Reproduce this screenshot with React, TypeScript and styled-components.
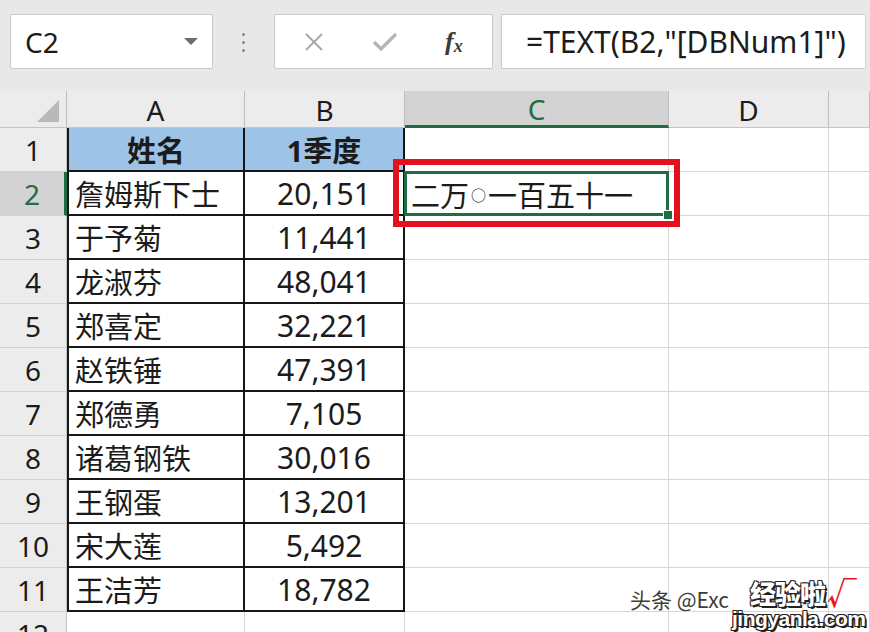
import React from 'react'
import styled, { createGlobalStyle } from 'styled-components'

const GlobalStyle = createGlobalStyle`
  html, body {
    margin: 0;
    padding: 0;
    background: #fff;
    overflow: hidden;
  }
  body {
    font-family: "Noto Sans", "Noto Sans CJK SC", sans-serif;
    color: #1b1b1b;
  }
`

const rows = [
  { name: '詹姆斯下士', q1: '20,151' },
  { name: '于予菊', q1: '11,441' },
  { name: '龙淑芬', q1: '48,041' },
  { name: '郑喜定', q1: '32,221' },
  { name: '赵铁锤', q1: '47,391' },
  { name: '郑德勇', q1: '7,105' },
  { name: '诸葛钢铁', q1: '30,016' },
  { name: '王钢蛋', q1: '13,201' },
  { name: '宋大莲', q1: '5,492' },
  { name: '王洁芳', q1: '18,782' },
]

const Page = styled.div`
  position: relative;
  width: 870px;
  height: 632px;
  overflow: hidden;
`

const Toolbar = styled.div`
  height: 91px;
  background: #e8e8e8;
  display: flex;
  align-items: flex-start;
  padding: 14px 0 0 10px;
  box-sizing: border-box;
`

const Box = styled.div<{ $w?: number }>`
  height: 55px;
  background: #fff;
  border: 1px solid #c9c9c9;
  border-radius: 2px;
  box-sizing: border-box;
  display: flex;
  align-items: center;
  ${p => (p.$w ? `width: ${p.$w}px; flex: none;` : 'flex: 1;')}
`

const NameBox = styled(Box)`
  justify-content: space-between;
  padding: 0 14px 0 14px;
  font-size: 28px;
`

const Caret = styled.span`
  width: 0;
  height: 0;
  border-left: 7px solid transparent;
  border-right: 7px solid transparent;
  border-top: 7px solid #6d6d6d;
`

const Dots = styled.div`
  width: 61px;
  flex: none;
  display: flex;
  flex-direction: column;
  align-items: center;
  gap: 5px;
  padding-top: 19px;
  span {
    width: 3px;
    height: 3px;
    border-radius: 50%;
    background: #8a8a8a;
  }
`

const FuncBox = styled(Box)`
  justify-content: flex-start;
  gap: 47px;
  padding: 0 0 0 28px;
  margin-right: 8px;
`

const Fx = styled.span`
  font-family: "Liberation Serif", serif;
  font-style: italic;
  font-weight: bold;
  font-size: 26px;
  color: #3a3a3a;
  sub {
    font-size: 18px;
    vertical-align: -2px;
  }
`

const FormulaBox = styled(Box)`
  padding-left: 24px;
  margin-right: 4px;
  font-size: 30px;
  white-space: nowrap;
  border-right-color: #d8d8d8;
`

const Grid = styled.div`
  display: grid;
  grid-template-columns: 67px 178px 160px 264px 160px 1fr;
  grid-template-rows: 37px repeat(12, 44px);
  background: #e8e8e8;
`

const ColHead = styled.div<{ $sel?: boolean }>`
  background: ${p => (p.$sel ? '#d3d3d3' : '#ececec')};
  border-right: 1px solid #bdbdbd;
  border-bottom: ${p => (p.$sel ? '3px solid #1f6e43' : '1px solid #c4c4c4')};
  box-sizing: border-box;
  display: flex;
  align-items: center;
  justify-content: center;
  font-size: 28px;
  color: ${p => (p.$sel ? '#1f6e43' : '#1b1b1b')};
  padding-top: 2px;
`

const Corner = styled(ColHead)`
  align-items: flex-end;
  justify-content: flex-end;
  padding: 0 7px 5px 0;
  border-right-color: #bdbdbd;
`

const Triangle = styled.span`
  width: 0;
  height: 0;
  border-left: 22px solid transparent;
  border-bottom: 22px solid #b9b9b9;
`

const RowHead = styled.div<{ $sel?: boolean }>`
  background: ${p => (p.$sel ? '#d3d3d3' : '#ececec')};
  border-right: ${p => (p.$sel ? '3px solid #1f6e43' : '1px solid #c4c4c4')};
  border-bottom: 1px solid #d2d2d2;
  box-sizing: border-box;
  display: flex;
  align-items: center;
  justify-content: center;
  font-size: 28px;
  color: ${p => (p.$sel ? '#1f6e43' : '#1b1b1b')};
`

const Cell = styled.div<{
  $table?: boolean
  $first?: boolean
  $center?: boolean
  $head?: boolean
  $sel?: boolean
}>`
  position: relative;
  box-sizing: border-box;
  background: ${p => (p.$head ? '#9dc3e6' : '#fff')};
  border-right: ${p => (p.$table ? '2px solid #161616' : '1px solid #d6d6d6')};
  border-bottom: ${p => (p.$table ? '2px solid #161616' : '1px solid #d6d6d6')};
  border-left: ${p => (p.$first ? '2px solid #161616' : 'none')};
  display: flex;
  align-items: center;
  justify-content: ${p => (p.$center ? 'center' : 'flex-start')};
  padding: 0 6px;
  font-size: ${p => (p.$center && !p.$head ? '30px' : '29px')};
  font-weight: ${p => (p.$head ? 700 : 400)};
  white-space: nowrap;
  z-index: ${p => (p.$sel ? 2 : 'auto')};
`

const SmallCircle = styled.span`
  font-size: 15px;
  padding: 0 2px;
  transform: translateY(1px);
`

const Selection = styled.div`
  position: absolute;
  top: -1px;
  left: -1px;
  right: -1px;
  bottom: -1px;
  border: 3px solid #1f6e43;
  pointer-events: none;
`

const FillHandle = styled.div`
  position: absolute;
  right: -5px;
  bottom: -5px;
  width: 8px;
  height: 8px;
  background: #1f6e43;
  border: 1px solid #fff;
`

const RedBox = styled.div`
  position: absolute;
  top: -13px;
  left: -12px;
  right: -12px;
  bottom: -12px;
  border: 6px solid #e2111d;
  pointer-events: none;
`

const Watermark = styled.div`
  position: absolute;
  left: 630px;
  top: 584px;
  display: flex;
  align-items: flex-end;
  font-family: "Noto Sans CJK SC", sans-serif;
  font-size: 21px;
  color: #3d3d3d;
  text-shadow: 0 0 2px #fff, 0 0 2px #fff;
  pointer-events: none;
`

const Logo = styled.div`
  position: absolute;
  left: 732px;
  top: 576px;
  display: flex;
  flex-direction: column;
  align-items: flex-start;
  pointer-events: none;
  color: #fff;
  font-family: "Noto Sans CJK SC", sans-serif;
  font-weight: 900;
  text-shadow: -1px -1px 0 #222, 1px -1px 0 #222, -1px 1px 0 #222, 1px 1px 0 #222,
    2px 2px 0 #222;
`

const LogoTop = styled.div`
  padding-left: 18px;
  font-size: 26px;
  line-height: 30px;
  letter-spacing: -1px;
  span {
    color: #e8141e;
    font-size: 30px;
    text-shadow: none;
    margin-left: 2px;
  }
`

const LogoBottom = styled.div`
  font-family: "Liberation Sans", sans-serif;
  font-size: 21px;
  line-height: 22px;
  letter-spacing: -0.5px;
`

export default function App() {
  const renderRest = (r: number) => (
    <>
      <Cell $sel={r === 2}>
        {r === 2 && (
          <>
            二万<SmallCircle>○</SmallCircle>一百五十一
            <Selection />
            <FillHandle />
            <RedBox />
          </>
        )}
      </Cell>
      <Cell />
      <Cell />
    </>
  )

  return (
    <Page>
      <GlobalStyle />
      <Toolbar>
        <NameBox $w={203}>
          C2
          <Caret />
        </NameBox>
        <Dots>
          <span />
          <span />
          <span />
        </Dots>
        <FuncBox $w={219}>
          <svg width="22" height="22" viewBox="0 0 22 22">
            <path d="M3 3 L19 19 M19 3 L3 19" stroke="#a6a6a6" strokeWidth="1.8" fill="none" />
          </svg>
          <svg width="26" height="22" viewBox="0 0 26 22">
            <path d="M2 11 L9 18 L24 3" stroke="#b4b4b4" strokeWidth="3.2" fill="none" />
          </svg>
          <Fx>
            f<sub>x</sub>
          </Fx>
        </FuncBox>
        <FormulaBox>=TEXT(B2,"[DBNum1]")</FormulaBox>
      </Toolbar>

      <Grid>
        <Corner>
          <Triangle />
        </Corner>
        <ColHead>A</ColHead>
        <ColHead>B</ColHead>
        <ColHead $sel>C</ColHead>
        <ColHead>D</ColHead>
        <ColHead />

        <RowHead>1</RowHead>
        <Cell $table $first $head $center>
          姓名
        </Cell>
        <Cell $table $head $center>
          1季度
        </Cell>
        {renderRest(1)}

        {rows.map((row, i) => (
          <React.Fragment key={row.name}>
            <RowHead $sel={i + 2 === 2}>{i + 2}</RowHead>
            <Cell $table $first>
              {row.name}
            </Cell>
            <Cell $table $center>
              {row.q1}
            </Cell>
            {renderRest(i + 2)}
          </React.Fragment>
        ))}

        <RowHead>12</RowHead>
        <Cell />
        <Cell />
        <Cell />
        <Cell />
        <Cell />
      </Grid>

      <Watermark>头条 @Exc</Watermark>
      <Logo>
        <LogoTop>
          经验啦<span>√</span>
        </LogoTop>
        <LogoBottom>jingyanla.com</LogoBottom>
      </Logo>
    </Page>
  )
}
